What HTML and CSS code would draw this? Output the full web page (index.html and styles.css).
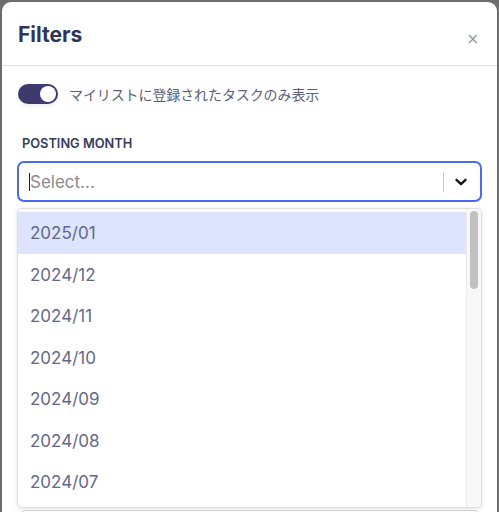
FILE: index.html
```html
<!DOCTYPE html>
<html lang="ja">
<head>
<meta charset="utf-8">
<title>Filters</title>
<link rel="stylesheet" href="styles.css">
</head>
<body>
<div class="modal">
  <div class="modal-header">
    <h2 class="modal-title">Filters</h2>
    <button class="close" aria-label="Close">×</button>
  </div>
  <div class="modal-body">
    <label class="toggle-row">
      <span class="toggle"><span class="knob"></span></span>
      <span class="toggle-label">マイリストに登録されたタスクのみ表示</span>
    </label>
    <div class="field-label">POSTING MONTH</div>
    <div class="select">
      <div class="select-value"><span class="caret"></span><span class="placeholder">Select...</span></div>
      <div class="select-indicators">
        <span class="sep"></span>
        <svg class="chev" width="14" height="14" viewBox="0 0 14 14"><path d="M2.5 4.8 L7 9.2 L11.5 4.8" fill="none" stroke="#1a1a1a" stroke-width="2.4" stroke-linecap="round" stroke-linejoin="round"/></svg>
      </div>
    </div>
    <div class="menu">
      <ul class="options">
        <li class="option active">2025/01</li>
        <li class="option">2024/12</li>
        <li class="option">2024/11</li>
        <li class="option">2024/10</li>
        <li class="option">2024/09</li>
        <li class="option">2024/08</li>
        <li class="option">2024/07</li>
      </ul>
      <div class="scrollbar"><div class="thumb"></div></div>
    </div>
    <div class="next-field"></div>
  </div>
</div>
</body>
</html>
```

FILE: styles.css
```css
html, body {
  margin: 0;
  padding: 0;
  height: 100%;
  overflow: hidden;
}
body {
  background: #6d6d6d;
  font-family: Inter, "Noto Sans CJK JP", sans-serif;
}
.modal {
  margin: 2px 2px 0 2px;
  background: #fff;
  border-radius: 9px 9px 0 0;
  height: calc(100vh - 2px);
  overflow: hidden;
}
.modal-header {
  display: flex;
  justify-content: space-between;
  align-items: center;
  padding: 20px 18px 17px 16px;
  border-bottom: 1px solid #dcdcdc;
}
.modal-title {
  margin: 0;
  font-size: 21px;
  line-height: 26px;
  font-weight: 700;
  color: #2f3459;
}
.close {
  border: 0;
  background: none;
  padding: 0;
  margin-top: 8px;
  font-family: "DejaVu Sans", sans-serif;
  font-size: 15px;
  line-height: 16px;
  color: #9096a8;
}
.modal-body {
  padding: 18px 15px 0 15px;
}
.toggle-row {
  display: flex;
  align-items: center;
  gap: 11px;
  margin-left: 1px;
}
.toggle {
  width: 40px;
  height: 20px;
  border-radius: 10px;
  background: #3e3a6d;
  display: flex;
  justify-content: flex-end;
  align-items: center;
  padding: 0 2px;
  box-sizing: border-box;
  box-shadow: 0 2px 5px rgba(0,0,0,0.08);
}
.knob {
  width: 16px;
  height: 16px;
  border-radius: 50%;
  background: #fff;
}
.toggle-label {
  font-family: "Noto Sans CJK JP", sans-serif;
  font-size: 14px;
  line-height: 20px;
  color: #5a5f78;
  letter-spacing: -0.1px;
}
.field-label {
  margin: 32px 0 0 5px;
  font-size: 12.8px;
  line-height: 16px;
  font-weight: 600;
  color: #363b60;
}
.select {
  margin-top: 9px;
  height: 41px;
  box-sizing: border-box;
  border: 2px solid #4c68f6;
  border-radius: 7px;
  display: flex;
  align-items: center;
  justify-content: space-between;
}
.select-value {
  display: flex;
  align-items: center;
  padding-left: 10px;
}
.caret {
  width: 1px;
  height: 18px;
  background: #222;
}
.placeholder {
  font-size: 17px;
  color: #8b8b8b;
}
.select-indicators {
  display: flex;
  align-items: center;
  height: 100%;
}
.sep {
  width: 1px;
  height: 20px;
  background: #cfcfcf;
}
.chev {
  margin: 0 12px 0 10px;
}
.menu {
  margin-top: 6px;
  height: 300px;
  box-sizing: border-box;
  border: 1px solid #dedede;
  border-radius: 5px;
  box-shadow: 0 1px 4px rgba(0,0,0,0.12);
  display: flex;
  overflow: hidden;
  background: #fff;
}
.options {
  list-style: none;
  margin: 0;
  padding: 3px 0 0 0;
  flex: 1;
}
.option {
  padding: 10px 12px 10px 12px;
  height: 21.5px;
  font-size: 17px;
  line-height: 23px;
  color: #646989;
}
.option.active {
  background: #dce5fd;
}
.scrollbar {
  width: 15px;
  background: #f8f8f8;
  border-left: 1px solid #ececec;
  padding-top: 2px;
  box-sizing: border-box;
}
.thumb {
  width: 8px;
  height: 78px;
  margin-left: 3px;
  border-radius: 4px;
  background: #c1c1c1;
}
.next-field {
  margin: 2px 3px 0 3px;
  height: 40px;
  border: 1px solid #cfcfcf;
  border-radius: 5px;
}
```
